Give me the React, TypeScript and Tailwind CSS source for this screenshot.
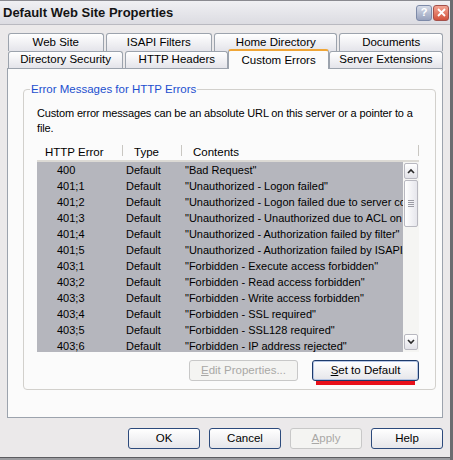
import React from "react";

const rows: [string, string][] = [
  ["400", '"Bad Request"'],
  ["401;1", '"Unauthorized - Logon failed"'],
  ["401;2", '"Unauthorized - Logon failed due to server configuration"'],
  ["401;3", '"Unauthorized - Unauthorized due to ACL on resource"'],
  ["401;4", '"Unauthorized - Authorization failed by filter"'],
  ["401;5", '"Unauthorized - Authorization failed by ISAPI/CGI application"'],
  ["403;1", '"Forbidden - Execute access forbidden"'],
  ["403;2", '"Forbidden - Read access forbidden"'],
  ["403;3", '"Forbidden - Write access forbidden"'],
  ["403;4", '"Forbidden - SSL required"'],
  ["403;5", '"Forbidden - SSL128 required"'],
  ["403;6", '"Forbidden - IP address rejected"'],
];

const Tab = ({ label, w }: { label: string; w: string }) => (
  <div
    className={`${w} h-full flex items-center justify-center border border-b-0 border-[#9ca3ad] rounded-t-[3px] bg-gradient-to-b from-white to-[#e4e4ea] text-[11.5px] text-black`}
  >
    {label}
  </div>
);

const Button = ({
  children,
  w,
  disabled,
  focused,
}: {
  children: React.ReactNode;
  w: string;
  disabled?: boolean;
  focused?: boolean;
}) => (
  <div
    className={`${w} h-[21px] flex items-center justify-center rounded-[3px] border text-[11.5px] ${
      disabled
        ? "border-[#c8c8c8] bg-[#f4f4f2] text-[#a9a8a6]"
        : focused
        ? "border-[#1d3a6b] bg-gradient-to-b from-white to-[#e6e6ea] text-black shadow-[inset_0_0_0_1px_#b6c6e4]"
        : "border-[#2c4a7c] bg-gradient-to-b from-white to-[#e6e6ea] text-black"
    }`}
  >
    {children}
  </div>
);

export default function App() {
  return (
    <div
      className="w-[453px] h-[460px] overflow-hidden bg-[#ebe9ea] flex flex-col border-r-[3px] border-[#6c6c70]"
      style={{ fontFamily: '"Liberation Sans", Arial, sans-serif' }}
    >
      {/* Title bar */}
      <div className="h-[25px] shrink-0 flex items-center justify-between pl-[3px] pr-[1px] border-t border-[#8a8a90] border-b border-b-[#b9b9c0] bg-gradient-to-b from-[#f0f0f3] to-[#dcdce2]">
        <span className="text-[13px] font-bold text-[#141414]">
          Default Web Site Properties
        </span>
        <div className="flex gap-[1px]">
          <div className="w-[16px] h-[16px] rounded-[3px] border border-[#7d8aa8] bg-gradient-to-b from-[#d6dbe8] to-[#98a2bd] flex items-center justify-center text-[11px] font-bold text-white">
            ?
          </div>
          <div className="w-[16px] h-[16px] rounded-[3px] border border-[#a4504a] bg-gradient-to-b from-[#f2a493] to-[#d2503a] flex items-center justify-center">
            <svg width="9" height="9" viewBox="0 0 9 9">
              <path d="M1 1L8 8M8 1L1 8" stroke="white" strokeWidth="1.8" />
            </svg>
          </div>
        </div>
      </div>

      <div className="flex flex-col px-[7px] pt-[8px]">
        {/* Tabs */}
        <div className="flex h-[18px] pl-[1px] gap-[2px]">
          <Tab label="Web Site" w="w-[96px]" />
          <Tab label="ISAPI Filters" w="w-[107px]" />
          <Tab label="Home Directory" w="w-[124px]" />
          <Tab label="Documents" w="w-[104px]" />
        </div>
        <div className="flex h-[17px] pl-[1px] items-end">
          <Tab label="Directory Security" w="w-[116px]" />
          <div className="w-[2px]" />
          <Tab label="HTTP Headers" w="w-[104px]" />
          <div className="w-[101px] h-[20px] -mb-px relative z-10 flex items-start justify-center pt-[1px] border border-b-0 border-[#9ca3ad] border-t-[2px] border-t-[#f0a637] rounded-t-[3px] bg-[#fbfbfb] text-[11.5px] text-black">
            Custom Errors
          </div>
          <Tab label="Server Extensions" w="w-[115px]" />
        </div>

        {/* Panel */}
        <div className="h-[350px] border border-[#9ca3ad] bg-[#fbfbfb] pl-[15px] pt-[13px]">
          <div className="relative w-[413px] h-[308px]">
            <div className="absolute left-0 right-0 top-[7px] bottom-0 border border-[#d2d0cc] rounded-[4px]" />
            <span className="absolute left-[7px] top-0 px-[1px] bg-[#fbfbfb] text-[11.5px] text-[#1c4fcf] leading-[14px]">
              Error Messages for HTTP Errors
            </span>
            <div className="relative pt-[24px] pl-[14px] flex flex-col">
              <p className="text-[11px] leading-[15px] text-black w-[385px] tracking-[-0.15px]">
                Custom error messages can be an absolute URL on this server or a pointer to a file.
              </p>
              {/* List */}
              <div className="mt-[9px] w-[382px] h-[207px] flex flex-col overflow-hidden bg-white">
                <div className="h-[17px] shrink-0 flex items-center border-b-[2px] border-[#dcdad5] bg-[#fbfbfb] text-[11.5px] text-black">
                  <span className="w-[87px] pl-[8px] flex justify-between pr-[1px]">
                    HTTP Error<span className="w-px h-[12px] bg-[#c9c7c2]" />
                  </span>
                  <span className="w-[58px] pl-[10px] flex justify-between">
                    Type<span className="w-px h-[12px] bg-[#c9c7c2]" />
                  </span>
                  <span className="flex-1 pl-[11px] flex justify-between">
                    Contents<span className="w-px h-[12px] bg-[#c9c7c2]" />
                  </span>
                </div>
                <div className="flex flex-1 min-h-0">
                  <div className="flex-1 min-w-0 bg-[#b5b6bd] flex flex-col text-[11px] text-black overflow-hidden">
                    {rows.map(([code, text]) => (
                      <div key={code} className="h-[16px] shrink-0 flex items-center whitespace-nowrap">
                        <span className="w-[89px] pl-[20px] shrink-0">{code}</span>
                        <span className="w-[59px] shrink-0">Default</span>
                        <span>{text}</span>
                      </div>
                    ))}
                  </div>
                  {/* Scrollbar */}
                  <div className="w-[16px] shrink-0 bg-[#f5f5f3] flex flex-col pt-[1px]">
                    <div className="h-[16px] mx-[1px] rounded-[2px] border border-[#b8b8c0] bg-gradient-to-b from-white to-[#e2e2e8] flex items-center justify-center">
                      <svg width="8" height="6" viewBox="0 0 8 6">
                        <path d="M1 5L4 2L7 5" stroke="#2b2b2b" strokeWidth="1.6" fill="none" />
                      </svg>
                    </div>
                    <div className="h-[47px] mx-[1px] mt-px rounded-[2px] border border-[#b8b8c0] bg-gradient-to-r from-white to-[#e6e6ec] flex flex-col items-center justify-center gap-[1px]">
                      <span className="w-[6px] h-px bg-[#9b9ba4]" />
                      <span className="w-[6px] h-px bg-[#9b9ba4]" />
                      <span className="w-[6px] h-px bg-[#9b9ba4]" />
                      <span className="w-[6px] h-px bg-[#9b9ba4]" />
                    </div>
                    <div className="flex-1" />
                    <div className="h-[16px] mx-[1px] mb-[2px] rounded-[2px] border border-[#b8b8c0] bg-gradient-to-b from-white to-[#e2e2e8] flex items-center justify-center">
                      <svg width="8" height="6" viewBox="0 0 8 6">
                        <path d="M1 1L4 4L7 1" stroke="#2b2b2b" strokeWidth="1.6" fill="none" />
                      </svg>
                    </div>
                  </div>
                </div>
              </div>
              {/* Group buttons */}
              <div className="flex justify-end gap-[14px] mt-[8px] w-[382px]">
                <Button w="w-[109px]" disabled>
                  <span>
                    <u>E</u>dit Properties...
                  </span>
                </Button>
                <div className="flex flex-col items-center">
                  <Button w="w-[107px]" focused>
                    <span>
                      <u>S</u>et to Default
                    </span>
                  </Button>
                  <div className="w-[99px] h-[4px] bg-[#e8101a]" />
                </div>
              </div>
            </div>
          </div>
        </div>

        {/* Dialog buttons */}
        <div className="flex justify-end gap-[9px] mt-[10px]">
          <Button w="w-[72px]">OK</Button>
          <Button w="w-[72px]">Cancel</Button>
          <Button w="w-[72px]" disabled>
            <span>
              <u>A</u>pply
            </span>
          </Button>
          <Button w="w-[72px]">Help</Button>
        </div>
      </div>
      <div className="mt-auto h-[3px] border-t border-[#5c5c60] bg-[#9c9ca0]" />
    </div>
  );
}
